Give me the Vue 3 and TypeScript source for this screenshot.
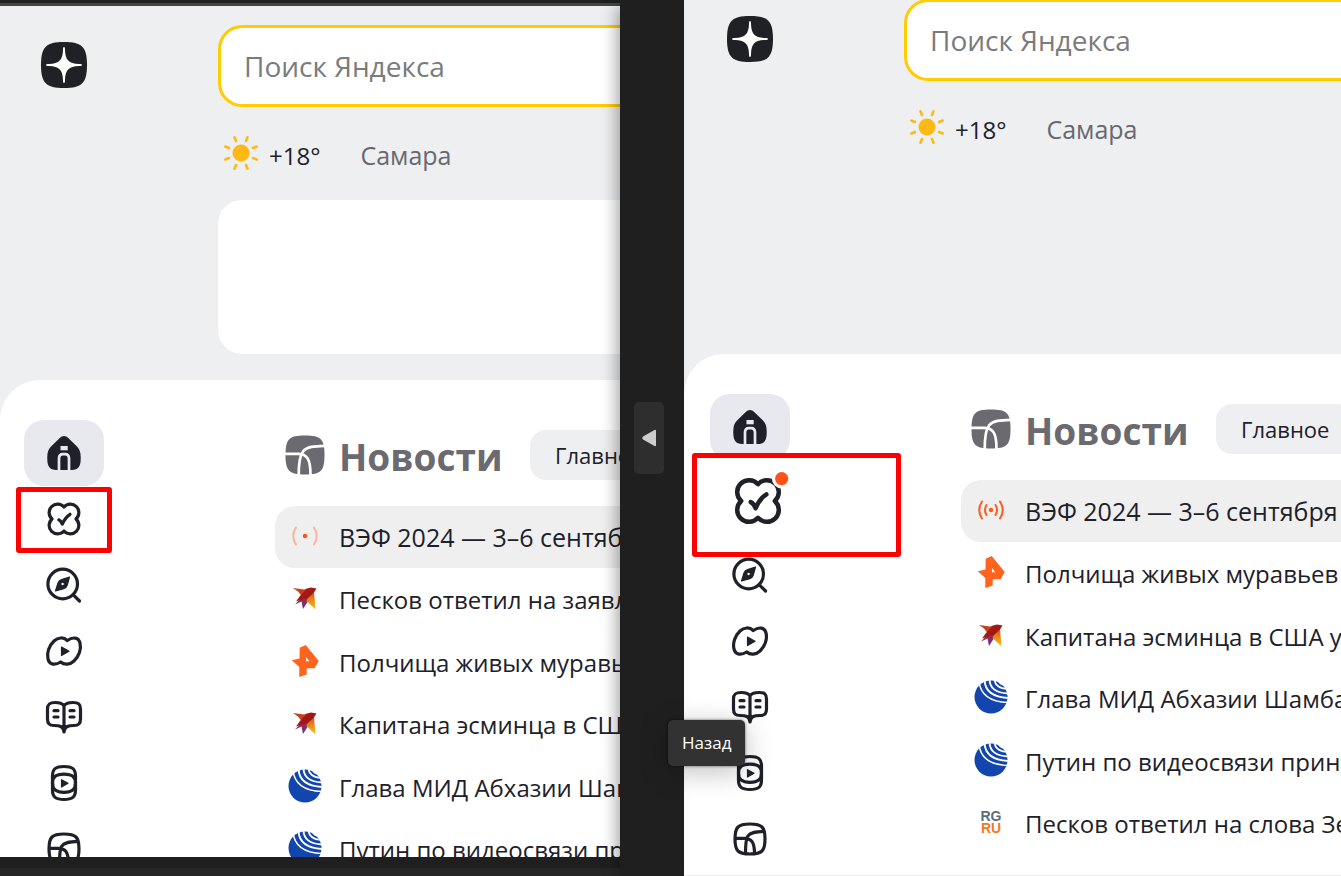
<script setup lang="ts">
interface Story {
  source: 'live' | 'liveFaded' | 'bird' | 'ria' | 'globe' | 'rg'
  title: string
}
interface Pane {
  id: string
  banner: boolean
  enlarged: boolean
  stories: Story[]
}

const navItems = [
  { id: 'home', label: 'Главная' },
  { id: 'tasks', label: 'Задания' },
  { id: 'explore', label: 'Обзор' },
  { id: 'video', label: 'Видео' },
  { id: 'book', label: 'Книги' },
  { id: 'shorts', label: 'Ролики' },
  { id: 'feed', label: 'Новости' },
]

const panes: Pane[] = [
  {
    id: 'left',
    banner: true,
    enlarged: false,
    stories: [
      { source: 'liveFaded', title: 'ВЭФ 2024 — 3–6 сентября' },
      { source: 'bird', title: 'Песков ответил на заявление' },
      { source: 'ria', title: 'Полчища живых муравьев' },
      { source: 'bird', title: 'Капитана эсминца в США' },
      { source: 'globe', title: 'Глава МИД Абхазии Шамба' },
      { source: 'globe', title: 'Путин по видеосвязи принял' },
    ],
  },
  {
    id: 'right',
    banner: false,
    enlarged: true,
    stories: [
      { source: 'live', title: 'ВЭФ 2024 — 3–6 сентября' },
      { source: 'ria', title: 'Полчища живых муравьев' },
      { source: 'bird', title: 'Капитана эсминца в США уволили' },
      { source: 'globe', title: 'Глава МИД Абхазии Шамба' },
      { source: 'globe', title: 'Путин по видеосвязи принял' },
      { source: 'rg', title: 'Песков ответил на слова Зеленского' },
    ],
  },
]

const rays = [22.5, 67.5, 112.5, 157.5, 202.5, 247.5, 292.5, 337.5]
</script>

<template>
  <main class="stage">
    <svg class="defs" width="0" height="0" aria-hidden="true">
      <defs>
        <linearGradient id="wing" x1="0" y1="0" x2="0" y2="1">
          <stop offset="0" stop-color="#a3241a" />
          <stop offset=".5" stop-color="#8a2f60" />
          <stop offset="1" stop-color="#5a2bb0" />
        </linearGradient>
        <linearGradient id="tail" x1="0" y1="0" x2="0" y2="1">
          <stop offset="0" stop-color="#d8541a" />
          <stop offset="1" stop-color="#f8c414" />
        </linearGradient>
        <clipPath id="disc"><circle cx="20" cy="20" r="17" /></clipPath>
      </defs>
    </svg>

    <template v-for="pane in panes" :key="pane.id">
      <section class="pane" :class="pane.id">
        <div class="page">
          <header class="top">
            <a class="logo" href="#" aria-label="Яндекс">
              <svg viewBox="0 0 48 48">
                <path d="M24 1C42 1 47 6 47 24S42 47 24 47 1 42 1 24 6 1 24 1Z" fill="#202124" />
                <path d="M24 6C24.8 6 25 7 25 9C25.4 19 28.500 22.600 39 23C41 23 42 23.200 42 24S41 25 39 25C28.500 25.400 25.400 29 25 39C25 41 24.800 42 24 42S23 41 23 39C22.600 29 19.500 25.400 9 25C7 25 6 24.800 6 24S7 23 9 23C19.500 22.600 22.600 19 23 9C23 7 23.200 6 24 6Z" fill="#fff" />
              </svg>
            </a>
            <div class="lead">
              <input class="search" type="text" placeholder="Поиск Яндекса" aria-label="Поиск Яндекса" />
              <div class="weather">
                <a class="temp" href="#">
                  <svg viewBox="0 0 40 40">
                    <circle cx="20" cy="20" r="8.500" fill="#ffb915" />
                    <path v-for="r in rays" :key="r" d="M33 20h4" :transform="`rotate(${r} 20 20)`" stroke="#ffb915" stroke-width="2.600" stroke-linecap="round" />
                  </svg>
                  <span>+18°</span>
                </a>
                <a class="city" href="#">Самара</a>
              </div>
              <div v-if="pane.banner" class="banner"></div>
            </div>
          </header>

          <div class="sheet">
            <nav class="nav">
              <a
                v-for="item in navItems"
                :key="item.id"
                href="#"
                class="nav-item"
                :class="[item.id, { big: pane.enlarged && item.id === 'tasks' }]"
                :aria-label="item.label"
              >
                <span v-if="item.id === 'tasks'" class="frame"></span>
                <svg v-if="item.id === 'home'" viewBox="0 0 40 40">
                  <path d="M20 3C21.500 3 23 3.700 24.500 5.200L32.500 13C35.500 16 36.700 19 36.700 24V26C36.700 33.500 34 37 28 37H12C6 37 3.300 33.500 3.300 26V24C3.300 19 4.500 16 7.500 13L15.500 5.200C17 3.700 18.500 3 20 3Z" fill="#202029" />
                  <path d="M16.500 13h7.200v4.300h-7.200z" fill="#e8e9ee" />
                  <path d="M15 38V25.500Q15 21.200 19 21.200H21Q25 21.200 25 25.500V38" fill="none" stroke="#e8e9ee" stroke-width="2.700" />
                </svg>
                <svg v-else-if="item.id === 'tasks'" class="line" viewBox="0 0 40 40">
                  <path d="M20 8A8.500 8.500 0 1 0 8 20A8.500 8.500 0 1 0 20 32A8.500 8.500 0 1 0 32 20A8.500 8.500 0 1 0 20 8Z" />
                  <path d="M14.800 20.800C16.500 21.500 17.500 23 18.300 25.200C20 21 22.500 17.500 26 15.300" />
                  <template v-if="pane.enlarged">
                    <circle class="halo" cx="36.900" cy="4" r="7" />
                    <circle class="dot" cx="36.900" cy="4" r="4.700" />
                  </template>
                </svg>
                <svg v-else-if="item.id === 'explore'" class="line" viewBox="0 0 40 40">
                  <circle cx="18.700" cy="19" r="14.800" />
                  <path d="M29.300 29.800L35.500 36" />
                  <path class="solid" fill-rule="evenodd" d="M25.500 12.200L17.500 14.500Q14.800 15.300 14 18L11.500 26L19.800 23.600Q22.400 22.800 23.200 20.200ZM18.600 17.200a1.800 1.800 0 1 1 0 3.600a1.800 1.800 0 1 1 0-3.600Z" />
                </svg>
                <svg v-else-if="item.id === 'video'" class="line" viewBox="0 0 40 40">
                  <path d="M23.300 9.500C19.500 5.800 14 6.300 10 10C5 14.800 2.500 22 4 28C5.500 34.300 11.500 34.300 16.700 31C20.500 34.300 26 33.700 30 30C35 25.200 37.500 18 36 12C34.500 5.700 28.500 5.900 23.300 9.500Z" />
                  <path class="solid" d="M17.500 16L25 20.300L17.500 24.500Z" />
                </svg>
                <svg v-else-if="item.id === 'book'" class="line" viewBox="0 0 40 40">
                  <path d="M20 9C18.500 6 15 5.500 11 5.500C5.500 5.500 3.500 7 3.500 12V22C3.500 27 5.500 28.500 10 28.500C15.500 28.500 19.300 29 20 35C20.700 29 24.500 28.500 30 28.500C34.500 28.500 36.500 27 36.500 22V12C36.500 7 34.500 5.500 29 5.500C25 5.500 21.500 6 20 9ZM20 9V35M10 13.700h4M10 20h4M26 13.700h4M26 20h4" />
                </svg>
                <svg v-else-if="item.id === 'shorts'" class="line" viewBox="0 0 40 40">
                  <path d="M20 3.500C28.500 3.500 31.500 6 31.500 13V27C31.500 34 28.500 36.500 20 36.500S8.500 34 8.500 27V13C8.500 6 11.500 3.500 20 3.500Z" />
                  <path d="M20 11.200C28 11.200 31.500 13.500 31.500 20S28 29.300 20 29.300S8.500 26.500 8.500 20S12 11.200 20 11.200Z" />
                  <path class="solid" d="M17.500 16.700L24 20.300L17.500 24Z" />
                </svg>
                <svg v-else class="line" viewBox="0 0 40 40">
                  <path d="M20 5C32 5 35 8 35 20S32 35 20 35S5 32 5 20S8 5 20 5ZM34 12.300C25 12.500 20 13.500 17.500 17.500C15.800 20.500 15.500 24 15.500 35M5 19.300H14C21.500 19.300 24.500 23 24.500 35" />
                </svg>
              </a>
            </nav>

            <section class="news">
              <div class="news-head">
                <svg viewBox="0 0 40 40">
                  <path d="M20 .5C36 .5 39.500 4 39.500 20S36 39.500 20 39.500S.5 36 .5 20S4 .5 20 .5Z" fill="#6b6a70" />
                  <path d="M40 10.800C29 11 22 11.500 18 16.500C15 20.500 13.700 27 13.700 40M0 18.800H13C22 18.800 25.500 24 25.500 40" fill="none" stroke="#fff" stroke-width="2.700" />
                </svg>
                <h2>Новости</h2>
                <button type="button" class="chip">Главное</button>
              </div>
              <ul class="stories">
                <li v-for="(story, i) in pane.stories" :key="story.title">
                  <a href="#" class="story" :class="{ hot: i === 0 }">
                    <svg viewBox="0 0 40 40">
                      <g v-if="story.source === 'live'" fill="none" stroke="#ff5b1f" stroke-width="2" stroke-linecap="round">
                        <circle cx="20" cy="20" r="1.200" fill="#ff5b1f" />
                        <path d="M11 11.500Q5.500 20 11 28.500M29 11.500Q34.500 20 29 28.500M15.500 15Q12.500 20 15.500 25M24.500 15Q27.500 20 24.500 25" />
                      </g>
                      <g v-else-if="story.source === 'liveFaded'" fill="none" stroke-width="2" stroke-linecap="round">
                        <circle cx="20" cy="20" r="2.200" fill="#ff4d14" />
                        <path d="M11 11.500Q5.500 20 11 28.500M29 11.500Q34.500 20 29 28.500" stroke="#f8b49c" />
                      </g>
                      <g v-else-if="story.source === 'bird'">
                        <path d="M8 10L19 11.500L22 10.500L23 15L17 18.500L13 13.500Z" fill="#c4401f" />
                        <path d="M19 17L10 26.500L16.500 23.500L18 31L22.500 24L25 16Z" fill="url(#wing)" />
                        <path d="M24 17L21.500 23L30.500 31.500L29 14Z" fill="url(#tail)" />
                        <path d="M15 18L22 10.500L26 9.500L31.500 10.500L29 14.500L23 20L17 21.500L11 23.500Z" fill="#a21815" />
                      </g>
                      <g v-else-if="story.source === 'ria'">
                        <path d="M14.700 6.700L20.700 4L33.700 20L29.700 27.300H21.700V33.500L14.300 36V26L6.800 19.300L14.500 17.500Z" fill="#ff641e" />
                        <path d="M21 16L24.300 20.300H21Z" fill="#fff" />
                      </g>
                      <g v-else-if="story.source === 'globe'">
                        <circle cx="20" cy="20" r="16.500" fill="#1245ad" />
                        <g clip-path="url(#disc)" fill="none" stroke="#fff">
                          <path d="M8 4Q10 25 38 25.500" stroke-width="1.600" />
                          <path d="M13.500 1Q13 20 38 21" stroke-width="1.900" />
                          <path d="M18.500 1Q18 16 38 16.500" stroke-width="1.900" />
                          <path d="M23.500 1Q23 11.500 38 12" stroke-width="1.800" />
                          <path d="M27.500 2Q28 8 36 8.500" stroke-width="1.800" />
                        </g>
                      </g>
                      <g v-else class="rg">
                        <text x="20" y="19" fill="#5d6c7b">RG</text>
                        <text x="20" y="31" fill="#f5781e">RU</text>
                      </g>
                    </svg>
                    <span>{{ story.title }}</span>
                  </a>
                </li>
              </ul>
            </section>
          </div>
        </div>
      </section>

      <aside v-if="pane.id === 'left'" class="divider">
        <button type="button" class="back" aria-label="Назад" aria-describedby="back-tip">
          <svg viewBox="0 0 14 18"><path d="M12.500 1Q14 0 14 2V16Q14 18 12.500 17L1 10.500Q-.5 9 1 7.500Z" fill="#ccc" /></svg>
        </button>
        <div id="back-tip" class="tip" role="tooltip">Назад</div>
      </aside>
    </template>
  </main>
</template>

<style>
body {
  margin: 0;
  background: #1f1f1f;
}
</style>

<style scoped>
.stage {
  display: grid;
  grid-template-columns: minmax(0, 620fr) 64px minmax(0, 657fr);
  height: 100vh;
  overflow: hidden;
  font-family: "Open Sans", "Noto Sans", sans-serif;
  color: #202029;
}
.stage * {
  box-sizing: border-box;
}
.defs {
  position: absolute;
}
a {
  color: inherit;
  text-decoration: none;
}
svg {
  display: block;
  flex: none;
}
.pane {
  display: flex;
  overflow: hidden;
  min-height: 0;
}
.pane.left {
  border-top: 3px solid #444;
  border-bottom: 8px solid #262626;
  margin-top: 3px;
  padding-bottom: 11px;
}
.pane.right {
  border-bottom: 1px solid #eee;
}
.page {
  flex: 1;
  min-width: 0;
  display: flex;
  flex-direction: column;
  background: #eeeff1;
  overflow: hidden;
}
.left .page {
  padding-top: 19px;
}
.right .page {
  padding-left: 2px;
}
.top {
  display: flex;
  flex: none;
  padding-left: 40px;
}
.right .top {
  margin-top: -1px;
  height: 355px;
}
.logo {
  flex: none;
  width: 178px;
  padding-top: 16px;
}
.logo svg {
  width: 48px;
  height: 48px;
}
.lead {
  flex: 1;
  min-width: 0;
}
.search {
  display: block;
  width: 100%;
  height: 82px;
  padding: 0 23px;
  border: 3px solid #ffcc00;
  border-right: 0;
  border-radius: 24px 0 0 24px;
  background: #fff;
  font: 28px "Open Sans", "Noto Sans", sans-serif;
  color: #202029;
  outline: none;
}
.search::placeholder {
  color: #7b7b7b;
  opacity: 1;
}
.weather {
  display: flex;
  align-items: center;
  gap: 40px;
  height: 93px;
  padding: 3px 0 0 3px;
  font-size: 24px;
  font-weight: 500;
}
.temp {
  display: flex;
  align-items: center;
  gap: 8px;
}
.temp svg {
  width: 40px;
  height: 40px;
  margin-bottom: 4px;
}
.city {
  font-size: 25px;
  color: #68686f;
}
.banner {
  height: 154px;
  margin-bottom: 26px;
  border-radius: 24px 0 0 24px;
  background: #fff;
}
.sheet {
  flex: 1;
  display: flex;
  min-height: 0;
  padding: 40px 0 0 24px;
  border-radius: 40px 0 0 0;
  background: #fff;
}
.right .sheet {
  margin-left: -2px;
  padding-left: 26px;
}
.nav {
  flex: none;
  width: 80px;
}
.nav-item {
  position: relative;
  display: flex;
  align-items: center;
  justify-content: center;
  height: 66px;
}
.nav-item svg {
  position: relative;
  width: 40px;
  height: 40px;
  overflow: visible;
}
.nav-item.home {
  border-radius: 20px;
  background: #e8e9ee;
}
.nav-item.big {
  height: 82px;
  padding-left: 16px;
}
.nav-item.big svg {
  width: 56px;
  height: 56px;
}
.frame {
  position: absolute;
  inset: 1px -8px -1px -8px;
  border: 5px solid #ff0000;
  border-radius: 3px;
}
.big .frame {
  inset: -7px -111px -15px -18px;
  background: #fff;
}
.line {
  fill: none;
  stroke: #202029;
  stroke-width: 3.2;
  stroke-linecap: round;
  stroke-linejoin: round;
}
.line .solid {
  fill: #202029;
  stroke-width: 1.2;
}
.halo {
  fill: #fff;
  stroke: none;
}
.dot {
  fill: #ff5317;
  stroke: none;
}
.news {
  flex: 1;
  min-width: 0;
  margin-left: 171px;
}
.news-head {
  display: flex;
  align-items: center;
  height: 66px;
  padding: 4px 0 0 10px;
}
.news-head svg {
  width: 40px;
  height: 40px;
}
h2 {
  flex: none;
  width: 191px;
  margin: 0 0 0 14px;
  padding-top: 3px;
  font-size: 37px;
  line-height: 48px;
  font-weight: 700;
  color: #6b6a70;
}
.chip {
  flex: none;
  height: 50px;
  padding: 0 25px;
  border: 0;
  border-radius: 16px;
  background: #eeeff1;
  font: 500 22px "Open Sans", "Noto Sans", sans-serif;
  color: #202029;
}
.stories {
  margin: 20px 0 0;
  padding: 0;
  list-style: none;
}
.stories li:nth-child(even) {
  margin-bottom: 1px;
}
.story {
  display: flex;
  align-items: center;
  gap: 14px;
  height: 62px;
  padding-left: 10px;
  font-size: 24px;
  white-space: nowrap;
}
.story svg {
  width: 40px;
  height: 40px;
  margin-bottom: 2px;
}
.story.hot {
  border-radius: 20px 0 0 20px;
  background: #efefef;
  font-size: 25px;
  font-weight: 500;
}
.rg text {
  font: 700 14px "Liberation Sans", sans-serif;
  text-anchor: middle;
}
.divider {
  position: relative;
  z-index: 1;
  display: flex;
  align-items: center;
  padding-left: 14px;
  background: #1f1f1f;
  box-shadow: -8px 0 16px -6px rgba(0, 0, 0, 0.4);
}
.back {
  display: flex;
  align-items: center;
  justify-content: center;
  width: 30px;
  height: 72px;
  padding: 0;
  border: 0;
  border-radius: 5px;
  background: #2e2e2e;
}
.back svg {
  width: 14px;
  height: 18px;
}
.tip {
  position: absolute;
  left: 48px;
  bottom: 110px;
  padding: 10px 14px;
  border-radius: 5px;
  background: #323232;
  box-shadow: 0 6px 28px rgba(0, 0, 0, 0.25), 0 0 3px rgba(0, 0, 0, 0.6);
  font-size: 17px;
  line-height: 26px;
  color: #fff;
}
</style>
